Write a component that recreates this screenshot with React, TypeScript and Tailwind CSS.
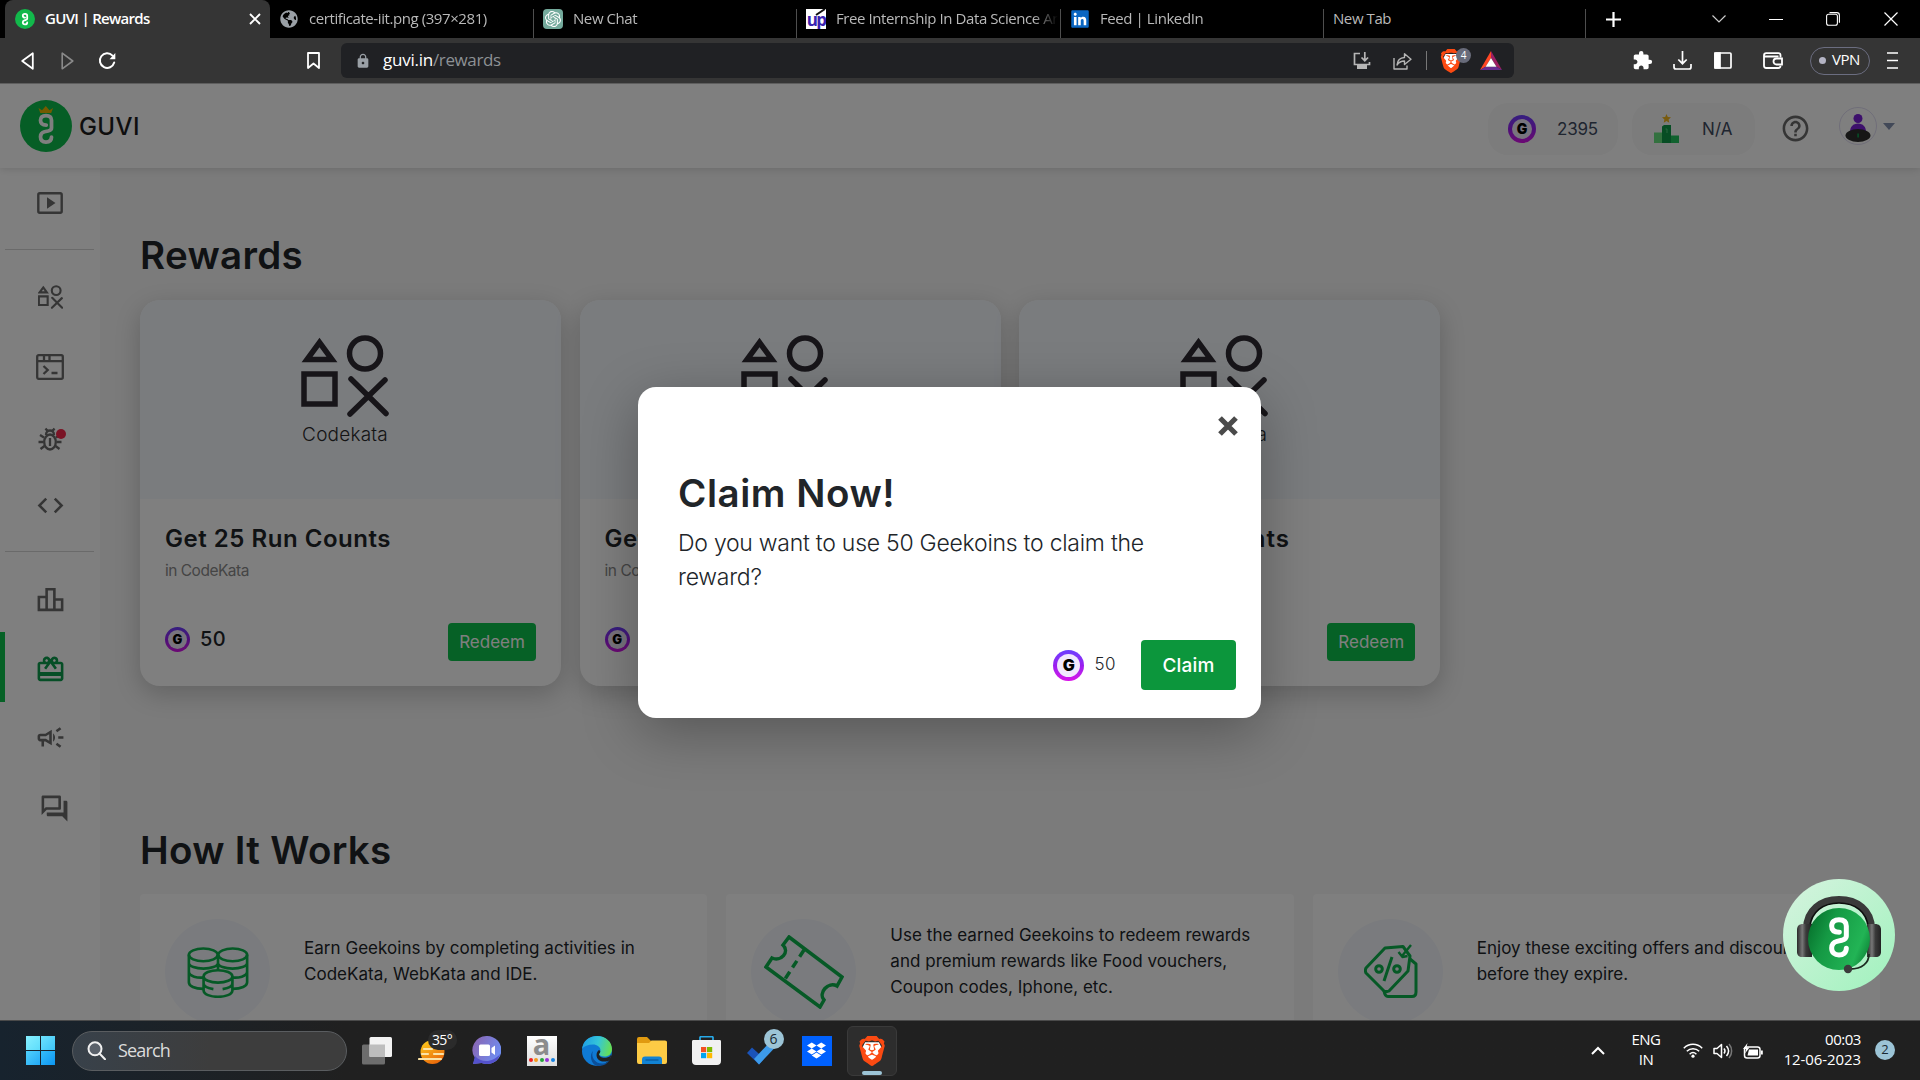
import type { ReactNode } from "react";
import { FaGlobeAmericas, FaLinkedin } from "react-icons/fa";
import {
  MdCode,
  MdExtension,
  MdHelpOutline,
  MdLock,
  MdOutlineCampaign,
  MdOutlineCardGiftcard,
  MdOutlineForum,
  MdOutlineLeaderboard,
} from "react-icons/md";
import { SiBrave, SiDropbox, SiOpenai } from "react-icons/si";

/* ---------- shared marks ---------- */

const MARK =
  "M31 46C16 46 8 40 8 27C8 14 17 8 30 8C44 8 52 14 52 27V58C52 66 46 68 38 70L24 73C12 76 8 82 8 93C8 107 17 114 30 114C43 114 52 107 52 94";

function GuviFavicon() {
  return (
    <svg viewBox="0 0 20 20" className="size-5">
      <circle cx="10" cy="10" r="10" fill="#12b84b" />
      <g transform="translate(6.6 4) scale(0.1 0.1)">
        <path d={MARK} fill="none" stroke="#fff" strokeWidth="18" strokeLinecap="round" transform="translate(4 0)" />
      </g>
    </svg>
  );
}

function Coin({ className, letter }: { className: string; letter: string }) {
  return (
    <div className={`flex shrink-0 items-center justify-center rounded-full bg-linear-to-b from-[#6a3cff] via-[#9a1df0] to-[#d90ce8] ${className}`}>
      <div className="flex size-full items-center justify-center rounded-full bg-[#f1e8fd]">
        <span className={`font-black leading-none text-black ${letter}`}>G</span>
      </div>
    </div>
  );
}

function BraveMark({ className }: { className: string }) {
  return (
    <div className={`relative flex shrink-0 items-center justify-center ${className}`}>
      <svg viewBox="0 0 24 24" className="absolute size-full">
        <path d="M6.5 5h11l2 4-2.500 9L12 22l-5-4L4.500 9z" fill="#fff" />
      </svg>
      <SiBrave className="relative size-full text-[#fb4a12]" />
    </div>
  );
}

/* ---------- browser chrome ---------- */

function Tab({ icon, label, width, last }: { icon?: ReactNode; label: string; width: string; last?: boolean }) {
  return (
    <div className={`flex h-full shrink-0 items-center ${width}`}>
      <div className="flex min-w-0 flex-1 items-center pl-[9px]">
        {icon && <div className="mr-[10px] flex w-5 shrink-0 justify-center">{icon}</div>}
        <span
          className={`-mt-[2px] flex-1 overflow-hidden whitespace-nowrap text-[15px] tracking-[-0.028em] text-[#b9b9b9] ${
            last ? "" : "[mask-image:linear-gradient(to_right,black_88%,transparent_99%)]"
          }`}
        >
          {label}
        </span>
      </div>
      <div className="mt-[9px] h-[29px] w-px self-start bg-[#4e4e4e]" />
    </div>
  );
}

function TabStrip() {
  return (
    <div className="flex h-[38px] bg-black pl-[5px]">
      <div className="flex h-full w-[265px] items-center rounded-t-lg bg-[#353535] pl-[10px] pr-[9px]">
        <GuviFavicon />
        <span className="-mt-[2px] ml-[10px] flex-1 text-[15px] font-semibold tracking-[-0.046em] text-white">GUVI | Rewards</span>
        <svg viewBox="0 0 12 12" className="size-3" stroke="#fff" strokeWidth="1.900">
          <path d="M1 1l10 10M11 1L1 11" />
        </svg>
      </div>
      <Tab width="w-[264px]" icon={<FaGlobeAmericas className="size-[18px] text-[#9aa0a6]" />} label="certificate-iit.png (397×281)" />
      <Tab
        width="w-[263px]"
        icon={
          <div className="flex size-5 items-center justify-center rounded bg-[#74aa9c]">
            <SiOpenai className="size-4 text-white" />
          </div>
        }
        label="New Chat"
      />
      <Tab
        width="w-[264px]"
        icon={
          <div className="relative flex size-5 items-center justify-center overflow-hidden bg-white">
            <span className="text-[17px] font-bold leading-none tracking-[-0.1em] text-[#3a22b0]">up</span>
            <svg viewBox="0 0 20 20" className="absolute inset-0" stroke="#111" strokeWidth="2">
              <path d="M10 6L19 0" />
            </svg>
          </div>
        }
        label="Free Internship In Data Science An"
      />
      <Tab width="w-[263px]" icon={<FaLinkedin className="size-5 text-[#0a66c2] [background:linear-gradient(white,white)_center/70%_70%_no-repeat]" />} label="Feed | LinkedIn" />
      <Tab width="w-[262px]" label="New Tab" last />
      <div className="flex flex-1 items-center">
        <svg viewBox="0 0 15 15" className="ml-[20px] size-[15px]" stroke="#fff" strokeWidth="2.200">
          <path d="M7.500 0v15M0 7.500h15" />
        </svg>
        <div className="flex-1" />
        <svg viewBox="0 0 14 8" className="mr-[43px] h-2 w-[14px]" fill="none" stroke="#ccc" strokeWidth="1.200">
          <path d="M.5.5L7 7l6.500-6.500" />
        </svg>
        <div className="mr-[43px] h-px w-[14px] bg-white" />
        <svg viewBox="0 0 14 14" className="mr-[44px] size-[14px]" fill="none" stroke="#fff" strokeWidth="1.100">
          <rect x=".6" y="2.200" width="10.800" height="11" rx="2" />
          <path d="M3.500.6h7.300a2.600 2.600 0 0 1 2.600 2.600v7.500" />
        </svg>
        <svg viewBox="0 0 14 14" className="mr-[22px] size-[14px]" stroke="#fff" strokeWidth="1.200">
          <path d="M.5.5l13 13M13.500.5l-13 13" />
        </svg>
      </div>
    </div>
  );
}

function Toolbar() {
  return (
    <div className="flex h-[45px] items-center bg-[#353535]">
      <svg viewBox="0 0 13 18" className="ml-[21px] h-[18px] w-[13px]" fill="none" stroke="#fff" strokeWidth="1.800" strokeLinejoin="round">
        <path d="M11.800 1.200v15.600L1.200 9z" />
      </svg>
      <svg viewBox="0 0 13 18" className="ml-[27px] h-[18px] w-[13px]" fill="none" stroke="#8a8a8a" strokeWidth="1.600" strokeLinejoin="round">
        <path d="M1.200 1.200v15.600L11.800 9z" />
      </svg>
      <svg viewBox="0 0 18 18" className="ml-[24px] size-[18px]" fill="none" stroke="#fff" strokeWidth="2">
        <path d="M14.500 3.600A7.300 7.300 0 1 0 16.200 10.500" strokeLinecap="round" />
        <path d="M17.300 1v6.200h-5.800z" fill="#fff" stroke="none" />
      </svg>
      <svg viewBox="0 0 13 17" className="ml-[191px] h-[17px] w-[13px]" fill="none" stroke="#fff" strokeWidth="1.800" strokeLinejoin="round">
        <path d="M1 1h11v15l-5.500-4.500L1 16z" />
      </svg>
      <div className="ml-[21px] flex h-[35px] w-[1173px] items-center rounded-md bg-[#202124] pl-[14px]">
        <MdLock className="size-4 text-[#9aa0a6]" />
        <span className="-mt-px ml-[12px] text-[17px] tracking-[-0.014em] text-white">guvi.in</span>
        <span className="-mt-px text-[17px] tracking-[-0.022em] text-[#8d9195]">/rewards</span>
        <div className="flex-1" />
        <svg viewBox="0 0 18 18" className="mr-[22px] size-[18px]" fill="none" stroke="#b5b5b5" strokeWidth="1.700">
          <path d="M7 1.500H1.500v11h15V10M11.800 0v8.500M8.500 5.500l3.300 3.200 3.300-3.200" />
          <path d="M4 13h10v4H4z" fill="#b5b5b5" stroke="none" />
        </svg>
        <svg viewBox="0 0 19 18" className="mr-[14px] h-[18px] w-[19px]" fill="none" stroke="#b5b5b5" strokeWidth="1.400" strokeLinejoin="round">
          <path d="M1 6v11h13v-3.500" />
          <path d="M4 13c.5-5 3-7.300 7.500-7.500V1.800L18 7.300l-6.500 5.200V9C8 9 6 10 4 13z" />
        </svg>
        <div className="mr-[12px] h-[19px] w-px bg-[#777]" />
        <div className="relative mr-[17px]">
          <BraveMark className="h-[24px] w-[24px]" />
          <div className="absolute -top-px left-[17px] flex size-[15px] items-center justify-center rounded-full bg-[#686b7a] text-[10px] text-white">4</div>
        </div>
        <svg viewBox="0 0 22 19" className="mr-[12px] h-[19px] w-[22px]">
          <path d="M11 0L0 19l5.500-3.200L11 7z" fill="#ff4724" />
          <path d="M11 0l11 19-5.500-3.200L11 7z" fill="#9e1f63" />
          <path d="M0 19h22l-5.500-3.200h-11z" fill="#662d91" />
          <path d="M11 7l5.500 8.800h-11z" fill="#fff" />
        </svg>
      </div>
      <MdExtension className="ml-[118px] size-[21px] text-white" />
      <svg viewBox="0 0 19 19" className="ml-[20px] size-[19px]" fill="none" stroke="#fff" strokeWidth="1.700">
        <path d="M9.500 0v12.500M5.300 8.500l4.200 4.200 4.200-4.200M1 13v3c0 1.200.6 2 1.800 2h13.400c1.200 0 1.800-.8 1.800-2v-3" />
      </svg>
      <svg viewBox="0 0 18 17" className="ml-[22px] h-[17px] w-[18px]" fill="none" stroke="#fff" strokeWidth="1.700">
        <rect x="1" y="1" width="16" height="15" rx="1" />
        <path d="M1 1h5v15H1z" fill="#fff" />
      </svg>
      <svg viewBox="0 0 20 17" className="ml-[31px] h-[17px] w-5" fill="none" stroke="#fff" strokeWidth="1.800">
        <path d="M17.500 5.500V3.200c0-1.200-.8-2-2-2H3.200c-1.300 0-2.200.9-2.200 2.200v10.400c0 1.300.9 2.200 2.200 2.200h12.100c1.300 0 2.200-.9 2.200-2.200M1.500 4.500h14" />
        <path d="M19 6.500h-5.500a2.900 2.900 0 0 0 0 6H19z" />
      </svg>
      <div className="ml-[27px] flex h-7 w-[60px] items-center rounded-full border border-[#6b6d80] pl-2">
        <div className="mr-[6px] size-[7px] rounded-full bg-[#b4b4c4]" />
        <span className="-mt-[2px] text-[15px] tracking-[-0.03em] text-white">VPN</span>
      </div>
      <svg viewBox="0 0 11 17" className="ml-[17px] h-[17px] w-[11px]" stroke="#fff" strokeWidth="1.700">
        <path d="M0 1h11M0 8.500h11M0 16h11" />
      </svg>
    </div>
  );
}

/* ---------- page ---------- */

function Header() {
  return (
    <header className="relative flex h-[84px] shrink-0 items-center bg-white pl-5 shadow-[0_1px_8px_rgba(0,0,0,0.14)]">
      <svg viewBox="0 0 52 52" className="size-[52px]">
        <circle cx="26" cy="26" r="26" fill="#0cbd4c" />
        <path d={MARK} transform="translate(18.500 13.500) scale(0.250)" fill="none" stroke="#fff" strokeWidth="15" strokeLinecap="round" />
        <path d="M18.500 8l3.500 2.300L25.800 6l3.600 4.300L33 8l-1.800 5H20.300z" fill="#e8b400" />
      </svg>
      <span className="ml-[7px] mt-[2px] text-[24px] font-medium tracking-[0.018em] text-[#1c1c1c]">GUVI</span>
      <div className="flex-1" />
      <div className="mt-[6px] flex h-[52px] w-[130px] items-center rounded-[20px] bg-[#f8f8f8] pl-5">
        <Coin className="-mt-px size-7 p-[4px]" letter="text-[14px]" />
        <span className="ml-[21px] mt-[2px] text-[17px] tracking-[-0.011em] text-[#3e4a60]">2395</span>
      </div>
      <div className="ml-[14px] mt-[6px] flex h-[52px] w-[123px] items-center rounded-[20px] bg-[#f8f8f8] pl-[22px]">
        <svg viewBox="0 0 26 30" className="-mt-px h-[30px] w-[26px]">
          <path d="M0 18.500h8V29H0z" fill="#66e27f" />
          <path d="M8 12.500l2-1.500h7v18H8z" fill="#0e9a49" />
          <path d="M17 21.500h8V29h-8z" fill="#22c55e" />
          <path d="M12.500 0l1.300 3 3.200.3-2.400 2.200.7 3.200-2.800-1.700-2.800 1.700.7-3.200L8 3.300l3.200-.3z" fill="#f2b71c" />
          <path d="M11.500 15h1.500v4" fill="none" stroke="#4fd07c" />
        </svg>
        <span className="ml-[22px] mt-[2px] text-[17px] tracking-[0.01em] text-[#3e4a60]">N/A</span>
      </div>
      <MdHelpOutline className="ml-[25px] mt-[5px] size-[31px] text-[#6b6b6b]" />
      <div className="ml-[28px] flex size-[38px] items-center justify-center rounded-full border border-[#e0dcf2]">
        <svg viewBox="0 0 26 28" className="mt-[3px] h-7 w-[26px]">
          <circle cx="13" cy="4.500" r="4.500" fill="#7a20d8" />
          <path d="M5 18c0-5 3-8.500 8-8.500s8 3.500 8 8.500z" fill="#7a20d8" />
          <ellipse cx="13" cy="21.500" rx="12.500" ry="6.500" fill="#2c2c2c" />
          <path d="M12.300 19.500h1.600v4h-1.600z" fill="#0d9b4e" />
        </svg>
      </div>
      <svg viewBox="0 0 12 7" className="ml-[6px] mr-[25px] h-[7px] w-3">
        <path d="M0 0h12L6 7z" fill="#8492b0" />
      </svg>
    </header>
  );
}

function ShapesIcon({ className, stroke }: { className: string; stroke: string }) {
  return (
    <svg viewBox="0 0 88 82" className={className} fill="none" stroke={stroke}>
      <path d="M18.500 7.500L31 24.500H6z" />
      <circle cx="64" cy="18.500" r="15.500" />
      <path d="M3 39h31v30H3z" />
      <path d="M50 44l35 34.500M84 45L49 79" strokeLinecap="round" />
    </svg>
  );
}

function NavItem({ children, height, active, divider }: { children: ReactNode; height: string; active?: boolean; divider?: boolean }) {
  return (
    <div
      className={`flex w-[100px] shrink-0 items-center justify-center border-l-5 pr-[5px] ${height} ${
        active ? "border-[#0cc24c] text-[#0c9c4c]" : "border-transparent text-[#6a6a6a]"
      } ${divider ? "relative" : ""}`}
    >
      {children}
      {divider && <div className="absolute bottom-0 left-0 h-px w-[89px] bg-[#d4d4d4]" />}
    </div>
  );
}

function Sidebar() {
  return (
    <nav className="flex w-[100px] shrink-0 flex-col bg-white shadow-[1px_0_4px_rgba(0,0,0,0.08)]">
      <NavItem height="h-[82px]" divider>
        <svg viewBox="0 0 26 22" className="mb-[12px] h-[22px] w-[26px]" fill="none" stroke="currentColor" strokeWidth="2.400">
          <rect x="1.300" y="1.300" width="23.400" height="19.400" rx="1.500" />
          <path d="M10 5.200v11.600l8.500-5.800z" fill="currentColor" stroke="none" />
        </svg>
      </NavItem>
      <NavItem height="h-[94px]">
        <ShapesIcon className="h-[24px] w-[25px] [stroke-width:7.500]" stroke="currentColor" />
      </NavItem>
      <NavItem height="h-[46px]">
        <svg viewBox="0 0 28 26" className="h-[26px] w-[28px]" fill="none" stroke="currentColor" strokeWidth="2.300">
          <rect x="1.200" y="1.200" width="25.600" height="23.600" rx="1.500" />
          <path d="M1 7.200h26M8 1v5M13.500 1v5M7.500 12l4.200 4-4.200 4M15.500 19h6" />
        </svg>
      </NavItem>
      <NavItem height="h-[98px]">
        <div className="relative">
          <svg viewBox="0 0 24 24" className="size-[24px]" fill="none" stroke="currentColor" strokeWidth="2.300">
            <ellipse cx="12" cy="15" rx="5.800" ry="7.500" />
            <path d="M7.500 1.500l2 2.500M16.500 1.500l-2 2.500M8 8c0-6 8-6 8 0M6 10.500L2 8M18 10.500L22 8M5.500 15H.5M18.500 15h5M6.500 19l-4 3M17.500 19l4 3M12 11v8" />
          </svg>
          <div className="absolute -right-[4px] top-[2px] size-[10px] rounded-full bg-[#f5274a]" />
        </div>
      </NavItem>
      <NavItem height="h-[64px]" divider>
        <MdCode className="mb-[30px] size-[31px]" />
      </NavItem>
      <NavItem height="h-[80px]">
        <MdOutlineLeaderboard className="mt-[15px] size-[31px]" />
      </NavItem>
      <NavItem height="h-[70px]" active>
        <MdOutlineCardGiftcard className="mt-[4px] size-[31px]" />
      </NavItem>
      <NavItem height="h-[70px]">
        <MdOutlineCampaign className="size-[31px]" />
      </NavItem>
      <NavItem height="h-[70px]">
        <MdOutlineForum className="ml-[8px] mt-[2px] size-[31px]" />
      </NavItem>
    </nav>
  );
}

function RewardCard({ title, tracking }: { title: string; tracking: string }) {
  return (
    <article className="h-[386px] w-[421px] overflow-hidden rounded-[20px] bg-white shadow-[0_8px_26px_rgba(0,0,0,0.2)]">
      <div className="flex h-[199px] flex-col items-center bg-[#f4f8fd] pr-[11px] pt-[35px]">
        <ShapesIcon className="h-[82px] w-[88px] [stroke-width:5.500]" stroke="#2f2a32" />
        <span className="mt-[5px] text-[19px] font-[350] leading-[26px] tracking-[0.01em] text-[#2b2b2b]">Codekata</span>
      </div>
      <div className="px-[25px] pt-[25px]">
        <h3 className={`whitespace-nowrap text-[24px] font-semibold leading-[30px] text-[#212529] ${tracking}`}>{title}</h3>
        <p className="mt-[5px] text-[15.5px] leading-6 tracking-[-0.032em] text-[#8a8a8a]">in CodeKata</p>
        <div className="mt-[40px] flex items-center">
          <Coin className="-mt-[5px] size-[25px] p-[3px]" letter="text-[13px]" />
          <span className="-mt-[7px] ml-[10px] flex-1 text-[20px] font-medium tracking-[0.018em] text-[#212529]">50</span>
          <button className="h-[38px] w-[88px] rounded bg-[#0cc24c] pt-[2px] text-[17px] text-white">Redeem</button>
        </div>
      </div>
    </article>
  );
}

function StepCard({ icon, children }: { icon: ReactNode; children: ReactNode }) {
  return (
    <div className="flex h-[154px] flex-1 rounded bg-white pl-[25px] pt-[25px]">
      <div className="flex size-[105px] shrink-0 items-center justify-center rounded-full bg-[#f4f7fc]">{icon}</div>
      <div className="ml-[34px] mt-[2px] flex h-20 items-center whitespace-nowrap text-[17px] leading-[26px] tracking-[0.002em] text-[#212529]">
        <p>{children}</p>
      </div>
    </div>
  );
}

const GREEN = "#0cb34c";

function CoinsIcon() {
  return (
    <svg viewBox="0 0 62 52" className="mt-px h-[51px] w-[62px]" fill="none" stroke={GREEN} strokeWidth="2.700">
      <ellipse cx="16" cy="8" rx="14.700" ry="6.500" />
      <ellipse cx="46" cy="8" rx="14.700" ry="6.500" />
      <path d="M1.300 8v28c0 4 6 6.700 14.700 6.700M1.300 16c0 8 29.700 8 29.700 0M1.300 25c0 5 9 7 16 6M60.700 8v28c0 4-6 6.700-14.700 6.700M31 16c0 8 29.700 8 29.700 0M60.700 25c0 5-9 7-16 6M31 8v16" />
      <ellipse cx="31" cy="30" rx="14.700" ry="6.300" />
      <path d="M16.300 30v14c0 9 29.400 9 29.400 0V30M16.300 37c0 3 4 5 10 6M45.700 37c0 3-4 5-10 6" />
    </svg>
  );
}

function TicketIcon() {
  return (
    <svg viewBox="0 0 80 74" className="h-[74px] w-[80px]" fill="none" stroke={GREEN} strokeWidth="3.500" strokeLinejoin="miter">
      <path d="M25 2L78 42L73 51C64 46 54 58 60 65L56 72L2 32L8 23C17 27 26 17 19 10z" />
      <path d="M40 15l-19 29" strokeDasharray="8 5" />
    </svg>
  );
}

function TagsIcon() {
  return (
    <svg viewBox="0 0 54 54" className="-mt-px ml-[2px] h-[54px] w-[54px]" fill="none" stroke={GREEN} strokeWidth="3" strokeLinejoin="round">
      <path d="M39 2.500L21 4L2 24c-1 2-1 3 0 5l18 18c2 1 3 1 5 0L44 27l2-15z" />
      <path d="M46 15l6 5v28c0 3-1.500 4.500-4 4.500H24c-2.500 0-3.500-2-4-6" />
      <path d="M47 1L38 12M34.500 8l4 5 5-1" strokeWidth="2.400" />
      <circle cx="15" cy="25" r="3.300" />
      <circle cx="33" cy="25" r="3.300" />
      <path d="M28 13l-8 24" />
    </svg>
  );
}

function Page() {
  return (
    <div className="flex flex-1">
      <Sidebar />
      <main className="flex-1 bg-[#f6f6f6] pl-10 pr-10 pt-[63px]">
        <h1 className="text-[38.5px] font-semibold leading-[48px] tracking-[0.008em] text-[#212529]">Rewards</h1>
        <div className="mt-[21px] flex gap-[18.6px]">
          <RewardCard title="Get 25 Run Counts" tracking="tracking-[0.022em]" />
          <RewardCard title="Get 50 Run Counts" tracking="tracking-[0.022em]" />
          <RewardCard title="Get 100 Run Counts" tracking="tracking-[0.039em]" />
        </div>
        <h1 className="mt-[140px] text-[38.5px] font-semibold leading-[48px] tracking-[0.008em] text-[#212529]">How It Works</h1>
        <div className="mt-5 flex gap-[19px]">
          <StepCard icon={<CoinsIcon />}>
            Earn Geekoins by completing activities in
            <br />
            CodeKata, WebKata and IDE.
          </StepCard>
          <StepCard icon={<TicketIcon />}>
            Use the earned Geekoins to redeem rewards
            <br />
            and premium rewards like Food vouchers,
            <br />
            Coupon codes, Iphone, etc.
          </StepCard>
          <StepCard icon={<TagsIcon />}>
            Enjoy these exciting offers and discounts
            <br />
            before they expire.
          </StepCard>
        </div>
      </main>
    </div>
  );
}

function ClaimDialog() {
  return (
    <div className="absolute inset-0 bg-black/50 pl-[638px] pt-[303px]">
      <div className="flex h-[331px] w-[623px] flex-col rounded-[18px] bg-white pl-10 pr-[25px] pt-[29px] shadow-[0_14px_56px_rgba(0,0,0,0.3)]">
        <svg viewBox="0 0 20 20" className="mr-[-2px] size-5 self-end" stroke="#4a4a4a" strokeWidth="5.200">
          <path d="M2 2l16 16M18 2L2 18" />
        </svg>
        <h2 className="mt-[33px] text-[38.5px] font-semibold leading-[48px] tracking-[0.014em] text-[#212529]">Claim Now!</h2>
        <p className="mt-[9px] text-[23px] font-[350] leading-[34px] tracking-[-0.011em] text-[#212529]">
          Do you want to use 50 Geekoins to claim the
          <br />
          reward?
        </p>
        <div className="mt-[46px] flex items-center justify-end">
          <Coin className="size-[31px] p-[4px]" letter="text-[16px]" />
          <span className="ml-[10px] mr-[25px] text-[17px] font-[350] tracking-[0.03em] text-[#212529]">50</span>
          <button className="h-[50px] w-[95px] rounded bg-[#0c963c] pt-[2px] text-[19px] font-medium tracking-[0.01em] text-white">Claim</button>
        </div>
      </div>
    </div>
  );
}

function SupportBubble() {
  return (
    <svg viewBox="0 0 112 112" className="absolute bottom-[29px] right-[25px] size-[112px]">
      <defs>
        <linearGradient id="mint" x1="0" y1="0" x2="1" y2="1">
          <stop offset="0" stopColor="#d6f3df" />
          <stop offset="1" stopColor="#a0f2bd" />
        </linearGradient>
        <linearGradient id="ball" x1="0" y1="0.200" x2="1" y2="0.600">
          <stop offset="0" stopColor="#06702c" />
          <stop offset="0.350" stopColor="#159944" />
          <stop offset="0.850" stopColor="#22b455" />
          <stop offset="1" stopColor="#128f3e" />
        </linearGradient>
        <linearGradient id="cup" x1="0" y1="0" x2="1" y2="0">
          <stop offset="0" stopColor="#2a2a2a" />
          <stop offset="0.350" stopColor="#777" />
          <stop offset="0.600" stopColor="#3a3a3a" />
          <stop offset="1" stopColor="#222" />
        </linearGradient>
      </defs>
      <circle cx="56" cy="56" r="56" fill="url(#mint)" />
      <path d="M23.500 50C23.500 31 38 20.500 56 20.500S88.500 31 88.500 50" fill="none" stroke="#3a3a3a" strokeWidth="7" />
      <path d="M27 48C28 33 40 24 56 24s28 9 29 24" fill="none" stroke="#0d0d0d" strokeWidth="1.600" />
      <path d="M20 45h9v33H19c-3 0-5-2-5-5V51c0-4 2-6 6-6z" fill="url(#cup)" />
      <path d="M84 45h8c4 0 6 2 6 6v22c0 3-2 5-5 5h-9z" fill="url(#cup)" />
      <circle cx="56" cy="60" r="31" fill="url(#ball)" />
      <path d={MARK} transform="translate(46 38) scale(0.333)" fill="none" stroke="#fff" strokeWidth="15" strokeLinecap="round" />
      <path d="M86 75c0 9-7 15-19 15" fill="none" stroke="#1c2a20" strokeWidth="1.800" />
      <circle cx="65" cy="90" r="4.200" fill="#3b3b3b" />
    </svg>
  );
}

/* ---------- taskbar ---------- */

function Slot({ children }: { children: ReactNode }) {
  return <div className="flex h-full w-[55px] shrink-0 items-center justify-center">{children}</div>;
}

function Taskbar() {
  return (
    <footer className="flex h-[60px] shrink-0 items-center border-t border-[#4a4a4a] bg-linear-to-r from-[#17232e] via-[#202020] via-18% to-[#202020] text-white">
      <div className="ml-[26px] grid size-[29px] grid-cols-2 gap-px">
        <div className="bg-linear-to-br from-[#86f0ff] to-[#5cdcfb]" />
        <div className="bg-linear-to-br from-[#6ce2fd] to-[#3cc4f8]" />
        <div className="bg-linear-to-br from-[#4fd0fb] to-[#22a9f5]" />
        <div className="bg-linear-to-br from-[#34bdf9] to-[#0a96f2]" />
      </div>
      <div className="ml-[17px] flex h-10 w-[275px] items-center rounded-full border border-[#5a5d60] bg-linear-to-r from-[#38414a] via-[#3d3d3d] to-[#3d3d3d] pl-[14px]">
        <svg viewBox="0 0 19 19" className="size-[19px]" fill="none" stroke="#f0f0f0" strokeWidth="2">
          <circle cx="8" cy="7.800" r="6.500" fill="#5a616a" />
          <path d="M12.500 12.500l5.500 5.800" strokeLinecap="round" />
        </svg>
        <span className="ml-[12px] text-[18px] tracking-[-0.046em] text-[#dcdcdc]">Search</span>
      </div>
      <div className="ml-[2px] flex h-full">
        <Slot>
          <svg viewBox="0 0 30 28" className="h-7 w-[30px]">
            <rect y="7.500" width="23" height="20" rx="1.500" fill="#6d6d6d" />
            <rect x="7.500" width="22.500" height="20" rx="1.500" fill="#f2f2f2" />
            <path d="M7.500 7.500H23v12.500H7.500z" fill="#bdbdbd" />
          </svg>
        </Slot>
        <Slot>
          <div className="relative">
            <svg viewBox="0 0 28 28" className="h-7 w-[28px]">
              <defs>
                <linearGradient id="sun" x1="0" y1="0" x2="0.600" y2="1">
                  <stop offset="0" stopColor="#ffd21c" />
                  <stop offset="1" stopColor="#ea6a0c" />
                </linearGradient>
              </defs>
              <circle cx="14.500" cy="15" r="12" fill="url(#sun)" />
              <path d="M6 12h8M4 17h6M16 17h9M1 22h22" stroke="#fbe3a6" strokeWidth="2.200" strokeLinecap="round" />
            </svg>
            <div className="absolute -top-[7px] left-[10px] flex h-[20px] w-[29px] items-center justify-center rounded-full bg-[#2b2b2b] text-[14px] tracking-[-0.05em]">35°</div>
          </div>
        </Slot>
        <Slot>
          <svg viewBox="0 0 29 29" className="size-[29px]">
            <defs>
              <linearGradient id="chat" x1="0" y1="0" x2="1" y2="0.500">
                <stop offset="0" stopColor="#8c62ad" />
                <stop offset="1" stopColor="#6f8df0" />
              </linearGradient>
            </defs>
            <path d="M14.500 0a14.500 14 0 1 1-5 27L1 28l2-6A14 14 0 0 1 14.500 0z" fill="url(#chat)" />
            <path d="M3 20c6 7 18 7 25-2-2 8-10 12-18.500 9L1 28z" fill="#5452cc" />
            <rect x="7" y="8.500" width="11" height="11.500" rx="1.500" fill="#fff" />
            <path d="M19.500 12l3.500-2.500v9.500l-3.500-2.500z" fill="#fff" />
          </svg>
        </Slot>
        <Slot>
          <div className="flex h-[30px] w-[30px] flex-col items-center bg-linear-to-b from-white to-[#dedede]">
            <span className="-mt-[5px] h-[27px] text-[29px] font-bold leading-[25px] text-[#8c8c8c]">a</span>
            <div className="flex gap-[1.500px]">
              <div className="size-1 rounded-full bg-[#f02020]" />
              <div className="size-1 rounded-full bg-[#f59a1c]" />
              <div className="size-1 rounded-full bg-[#25a53c]" />
              <div className="size-1 rounded-full bg-[#9b30d8]" />
              <div className="size-1 rounded-full bg-[#1684e4]" />
            </div>
          </div>
        </Slot>
        <Slot>
          <svg viewBox="0 0 30 30" className="size-[30px]">
            <defs>
              <linearGradient id="edgeTop" x1="0" y1="0.400" x2="1" y2="0.600">
                <stop offset="0" stopColor="#1f9fe6" />
                <stop offset="0.500" stopColor="#35c6d8" />
                <stop offset="1" stopColor="#6ae04c" />
              </linearGradient>
            </defs>
            <circle cx="15" cy="15" r="15" fill="#0f7ad4" />
            <path d="M0 13C1 5 7 0 15 0c9 0 15 6 15 13 0 5-3.500 7.500-7.500 7.500-3 0-5.500-1-5.500-2.500 0-1 1.500-1.500 1.500-4C18.500 11 15 8.500 11 8.500 6 8.500 2 10 0 13z" fill="url(#edgeTop)" />
            <path d="M11 15c-2.500 6 2 13 10 12.500 3 0 5-1.500 7-4-3 6-9 6.500-13 6.500C9 28 7 19 11 15z" fill="#0c4f99" />
            <path d="M17 18c0 3 4 4.500 8 3.500 2-.5 3.500-1.500 4-3 0 3-.5 4-1.500 5.500-4 3-13 2-13-5 0-3 2-4.500 2.500-5 2 1 1.500 2.500 0 4z" fill="#202020" />
          </svg>
        </Slot>
        <Slot>
          <svg viewBox="0 0 30 27" className="h-[27px] w-[30px]">
            <path d="M0 2a2 2 0 0 1 2-2h8l4 4h14a2 2 0 0 1 2 2v5H0z" fill="#e09a10" />
            <path d="M0 6h12l2.500-2.500H28a2 2 0 0 1 2 2V25a2 2 0 0 1-2 2H2a2 2 0 0 1-2-2z" fill="#fdcb45" />
            <path d="M5 27v-4.500a3 3 0 0 1 3-3h14a3 3 0 0 1 3 3V27z" fill="#1283d4" />
            <path d="M8.500 23h13" stroke="#0b5a9c" strokeWidth="1.300" />
          </svg>
        </Slot>
        <Slot>
          <svg viewBox="0 0 29 29" className="size-[29px]">
            <path d="M8 6V1.500A1 1 0 0 1 9 .7h11a1 1 0 0 1 1 .8V6" fill="none" stroke="#27a9e8" strokeWidth="1.700" />
            <path d="M0 5.500C0 4.500.5 4 1.500 4h26c1 0 1.500.5 1.500 1.500V25c0 2.500-1.500 4-4 4H4c-2.500 0-4-1.500-4-4z" fill="#f1f1f1" />
            <path d="M9 11h5.200v5.200H9z" fill="#f25022" />
            <path d="M15 11h5.200v5.200H15z" fill="#7fba00" />
            <path d="M9 17h5.200v5.200H9z" fill="#00a4ef" />
            <path d="M15 17h5.200v5.200H15z" fill="#ffb900" />
          </svg>
        </Slot>
        <Slot>
          <div className="relative">
            <svg viewBox="0 0 30 22" className="mt-[6px] h-[22px] w-[30px]">
              <path d="M0 10l5-5.500 12 11-5 6z" fill="#1a53b8" />
              <path d="M12 21.500L7 16 22 0l6 4.500z" fill="#3d9bea" />
            </svg>
            <div className="absolute -top-[8px] left-[17px] flex size-5 items-center justify-center rounded-full bg-[#9cc4d6] text-[14px] text-[#1a2a33]">6</div>
          </div>
        </Slot>
        <Slot>
          <div className="flex size-[30px] items-center justify-center bg-[#0061fe]">
            <SiDropbox className="size-[19px] text-white" />
          </div>
        </Slot>
        <Slot>
          <div className="relative flex h-[50px] w-[50px] shrink-0 items-center justify-center rounded-md border border-[#3a3a3a] bg-[#2d2d2d]">
            <BraveMark className="size-[30px]" />
            <div className="absolute bottom-0 h-1 w-5 rounded-full bg-[#9cc4d6]" />
          </div>
        </Slot>
      </div>
      <div className="flex-1" />
      <div className="flex w-9 justify-center">
        <svg viewBox="0 0 14 9" className="h-[9px] w-[14px]" fill="none" stroke="#fff" strokeWidth="2">
          <path d="M1 8l6-6 6 6" />
        </svg>
      </div>
      <div className="-mt-[3px] mr-[2px] w-[60px] text-center text-[15px] leading-5 tracking-[-0.035em]">
        ENG
        <br />
        IN
      </div>
      <div className="flex w-[30px] justify-center">
        <svg viewBox="0 0 20 15" className="h-[15px] w-5" fill="none" stroke="#fff" strokeWidth="1.500">
          <path d="M.8 5.200c5.200-5.200 13.200-5.200 18.400 0M3.800 8.300c3.500-3.500 8.900-3.500 12.400 0M6.600 11.200c2-2 4.800-2 6.800 0" />
          <circle cx="10" cy="13.200" r="1.600" fill="#fff" stroke="none" />
        </svg>
      </div>
      <div className="flex w-[30px] justify-center">
        <svg viewBox="0 0 20 16" className="h-4 w-5" fill="none" stroke="#fff" strokeWidth="1.500" strokeLinejoin="round">
          <path d="M1 5.500h3L8.500 1.500v13L4 10.500H1zM11 5.500c1.200 1.500 1.200 3.500 0 5M13.500 3c2.500 3 2.500 7 0 10" />
          <path d="M16 1c3.500 4 3.500 10 0 14" stroke="#777" />
        </svg>
      </div>
      <div className="mr-[3px] flex w-[30px] justify-center">
        <svg viewBox="0 0 20 16" className="h-4 w-5" fill="none" stroke="#fff" strokeWidth="1.500">
          <rect x="1.500" y="4" width="15.500" height="11" rx="2.500" />
          <path d="M6 6.500h9v6H4.500z" fill="#fff" stroke="none" />
          <path d="M18 7.500h1.800v4H18zM4.500 0L0 6h3l-1 4.500L6.500 4.500h-3z" fill="#fff" stroke="none" />
        </svg>
      </div>
      <div className="-mt-[4px] mr-[14px] w-[90px] text-right text-[15px] leading-5 tracking-[-0.006em]">
        <span className="tracking-[-0.03em]">00:03</span>
        <br />
        12-06-2023
      </div>
      <div className="-mt-px mr-[25px] flex size-5 items-center justify-center rounded-full bg-[#9cc4d6] text-[13px] text-[#1a2a33]">2</div>
    </footer>
  );
}

export default function App() {
  return (
    <div className="flex h-[1080px] w-[1920px] flex-col overflow-hidden bg-black font-['Open_Sans','Noto_Sans',sans-serif]">
      <TabStrip />
      <Toolbar />
      <div className="h-px shrink-0 bg-[#5e5e5e]" />
      <div className="relative flex h-[936px] shrink-0 flex-col overflow-hidden bg-white font-[Inter,sans-serif]">
        <Header />
        <Page />
        <ClaimDialog />
        <SupportBubble />
      </div>
      <Taskbar />
    </div>
  );
}
